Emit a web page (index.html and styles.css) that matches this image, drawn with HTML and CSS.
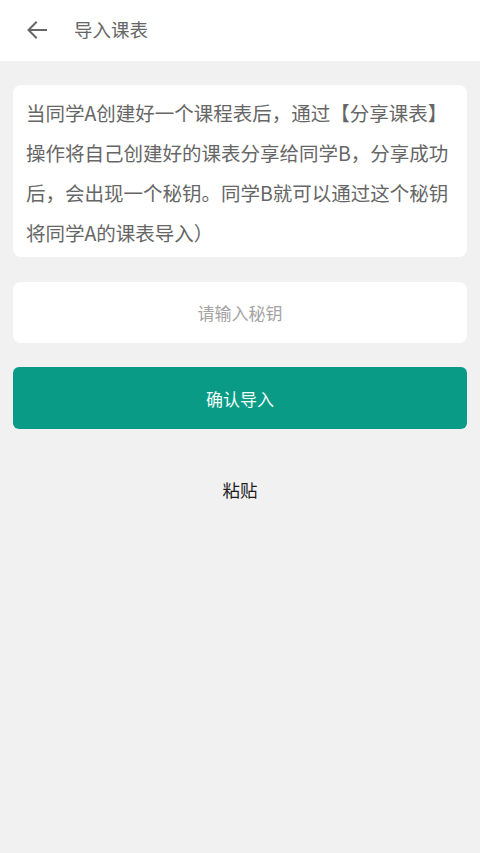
FILE: index.html
```html
<!DOCTYPE html>
<html lang="zh-CN">
<head>
<meta charset="utf-8">
<title>导入课表</title>
<link rel="stylesheet" href="styles.css">
</head>
<body>
<div class="page">
  <header class="topbar">
    <span class="back" aria-label="返回">
      <svg width="22" height="20" viewBox="0 0 22 20" fill="none" stroke="#666" stroke-width="2" stroke-linecap="square">
        <path d="M20 10H3"/>
        <path d="M10 2.5L2.5 10L10 17.5" stroke-linejoin="miter"/>
      </svg>
    </span>
    <h1 class="title">导入课表</h1>
  </header>
  <main class="content">
    <div class="card desc">当同学A创建好一个课程表后，通过【分享课表】操作将自己创建好的课表分享给同学B，分享成功后，会出现一个秘钥。同学B就可以通过这个秘钥将同学A的课表导入）</div>
    <div class="card input">
      <span class="placeholder">请输入秘钥</span>
    </div>
    <div class="btn">确认导入</div>
    <div class="paste">粘贴</div>
  </main>
</div>
</body>
</html>
```

FILE: styles.css
```css
* { box-sizing: border-box; }
html, body {
  margin: 0;
  padding: 0;
  height: 100%;
}
body {
  background: #f1f1f1;
  font-family: "Noto Sans CJK SC", "Noto Sans", sans-serif;
}
.page {
  min-height: 853px;
  display: flex;
  flex-direction: column;
}
.topbar {
  height: 61px;
  background: #fff;
  display: flex;
  align-items: center;
  padding-left: 26px;
  padding-bottom: 2px;
}
.back {
  display: flex;
  width: 22px;
  height: 20px;
  margin-top: 1px;
}
.title {
  margin: 0 0 0 26px;
  font-size: 18.5px;
  font-weight: 400;
  color: #666;
  line-height: 1;
}
.content {
  flex: 1;
  padding: 24px 13px 0;
  display: flex;
  flex-direction: column;
}
.card {
  background: #fff;
  border-radius: 8px;
}
.desc {
  padding: 8px 12px 4px 13px;
  font-size: 19.5px;
  line-height: 40px;
  color: #666;
}
.input {
  margin-top: 25px;
  height: 61px;
  display: flex;
  align-items: center;
  justify-content: center;
}
.placeholder {
  font-size: 17px;
  color: #a3a3a3;
}
.btn {
  margin-top: 24px;
  height: 62px;
  background: #0a9b87;
  border-radius: 6px;
  display: flex;
  align-items: center;
  justify-content: center;
  color: #f4fbfa;
  font-size: 17px;
}
.paste {
  margin-top: 47px;
  text-align: center;
  font-size: 17.5px;
  font-weight: 400;
  color: #1e1e1e;
  line-height: 28px;
}
```
